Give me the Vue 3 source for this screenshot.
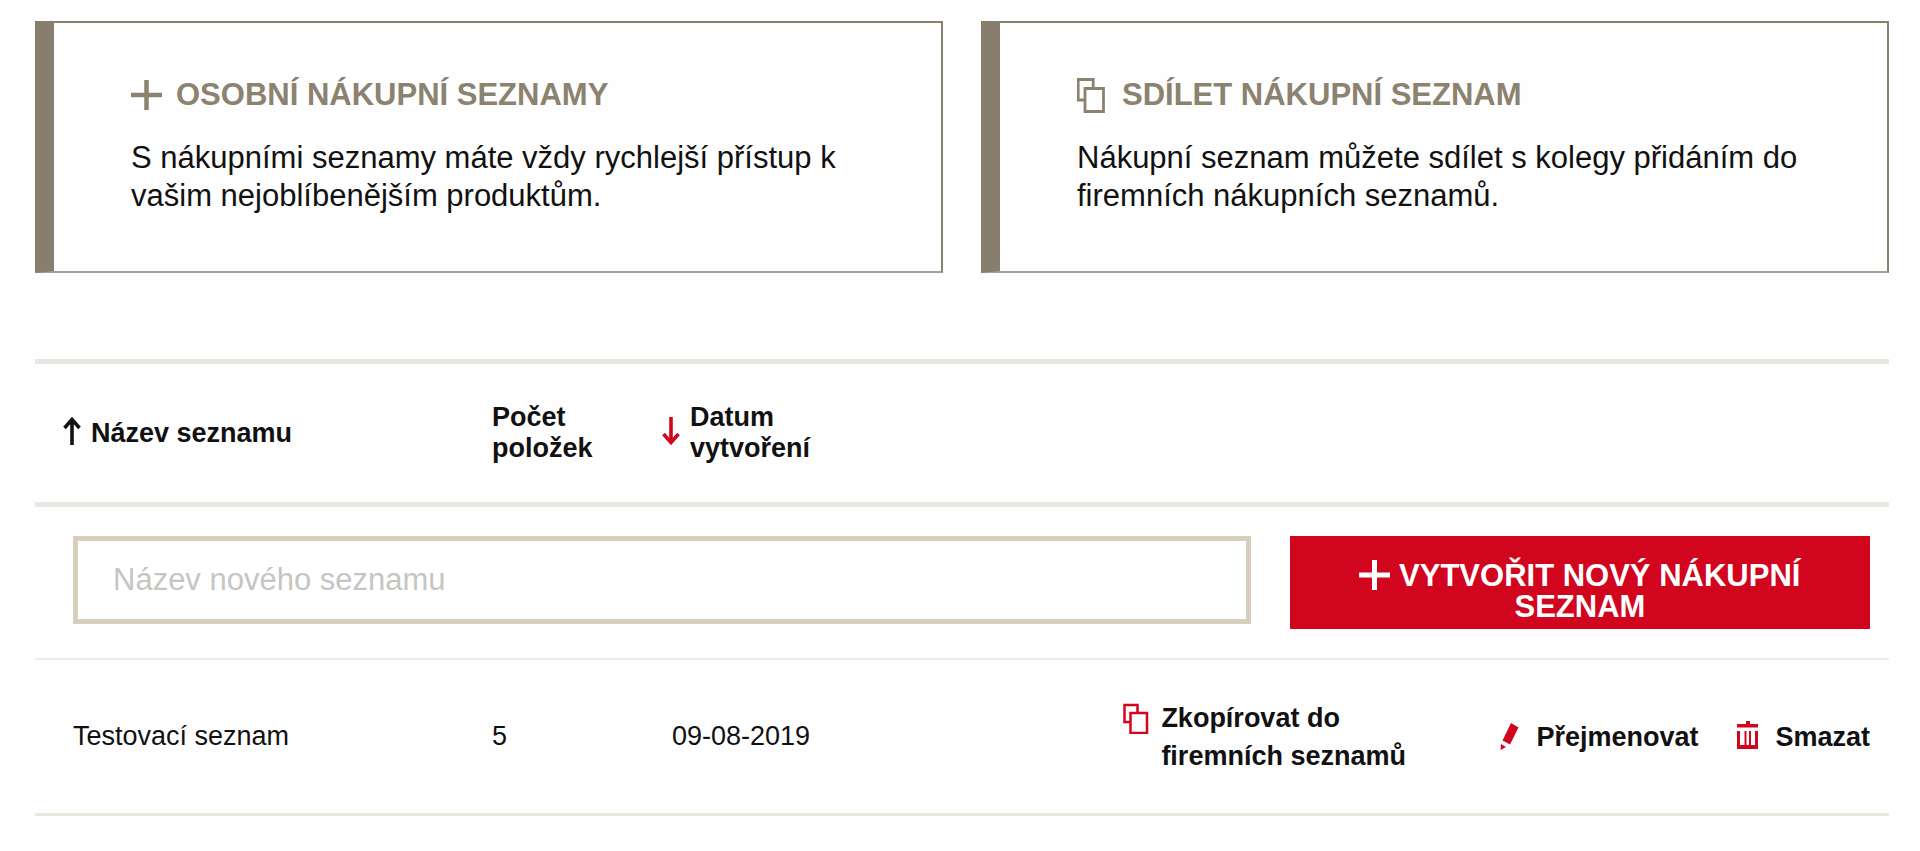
<script setup>
import { ref } from 'vue'

const newName = ref('')
const lists = [{ name: 'Testovací seznam', count: 5, created: '09-08-2019' }]
</script>

<template>
  <main class="page">
    <div class="cards">
      <section class="card">
        <h2 class="card-title">
          <svg class="card-icon" viewBox="0 0 34 36" aria-hidden="true">
            <path d="M15.500 3v30M0 18h31" fill="none" stroke="currentColor" stroke-width="4.500" />
          </svg>
          OSOBNÍ NÁKUPNÍ SEZNAMY
        </h2>
        <p class="card-text">S nákupními seznamy máte vždy rychlejší přístup k vašim nejoblíbenějším produktům.</p>
      </section>
      <section class="card">
        <h2 class="card-title">
          <svg class="card-icon" viewBox="0 0 34 36" aria-hidden="true">
            <path d="M8 23H1.200V2.500h15v9M8 11.500h18.500v23H8z" fill="none" stroke="currentColor" stroke-width="2.800" />
          </svg>
          SDÍLET NÁKUPNÍ SEZNAM
        </h2>
        <p class="card-text">Nákupní seznam můžete sdílet s kolegy přidáním do firemních nákupních seznamů.</p>
      </section>
    </div>

    <table class="lists">
      <colgroup>
        <col class="col-name" />
        <col class="col-count" />
        <col class="col-date" />
        <col />
      </colgroup>
      <thead>
        <tr>
          <th class="sortable" scope="col">
            <button class="sort" type="button">
              <svg class="arrow" viewBox="0 0 18 28" aria-hidden="true">
                <path d="M9 28V3M1.500 11L9 2.500l7.500 8.500" fill="none" stroke="currentColor" stroke-width="3.600" />
              </svg>
              <span>Název seznamu</span>
            </button>
          </th>
          <th scope="col">Počet<br />položek</th>
          <th class="sortable" scope="col">
            <button class="sort" type="button">
              <svg class="arrow active" viewBox="0 0 18 28" aria-hidden="true">
                <path d="M9 0v25M1.500 17L9 25.500l7.500-8.500" fill="none" stroke="currentColor" stroke-width="3.600" />
              </svg>
              <span>Datum<br />vytvoření</span>
            </button>
          </th>
          <td></td>
        </tr>
      </thead>
      <tbody>
        <tr class="create-row">
          <td colspan="4">
            <form class="create" @submit.prevent>
              <input v-model="newName" class="name-input" type="text" placeholder="Název nového seznamu" aria-label="Název nového seznamu" />
              <button class="create-button" type="submit">
                <svg class="plus" viewBox="0 0 31 30" aria-hidden="true">
                  <path d="M15.500 0v30M0 15h31" fill="none" stroke="currentColor" stroke-width="5" />
                </svg>
                VYTVOŘIT NOVÝ NÁKUPNÍ SEZNAM
              </button>
            </form>
          </td>
        </tr>
        <tr v-for="list in lists" :key="list.name" class="list-row">
          <td>{{ list.name }}</td>
          <td>{{ list.count }}</td>
          <td>{{ list.created }}</td>
          <td class="actions-cell">
            <div class="actions">
              <button class="action copy" type="button">
                <svg class="action-icon" viewBox="0 0 26 32" aria-hidden="true">
                  <path d="M7.500 20H1.500V3h13v8M7.500 11h16.500v20H7.500z" fill="none" stroke="currentColor" stroke-width="2.500" />
                </svg>
                <span>Zkopírovat do<br />firemních seznamů</span>
              </button>
              <button class="action" type="button">
                <svg class="action-icon" viewBox="0 0 26 32" aria-hidden="true">
                  <path d="M13 2l7.500 4.500L12 23.500 4.500 19.500zM3 23l5 3L2.500 29z" fill="currentColor" />
                </svg>
                <span>Přejmenovat</span>
              </button>
              <button class="action" type="button">
                <svg class="action-icon" viewBox="0 0 26 32" aria-hidden="true">
                  <path d="M0 3h9V0h4v3h8v3.500H0zM0 10h3v14h4.500V10h2v14h2.500V10h2v14H18V10h3v18H0z" fill="currentColor" />
                </svg>
                <span>Smazat</span>
              </button>
            </div>
          </td>
        </tr>
      </tbody>
    </table>
  </main>
</template>

<style>
body {
  background: #fefefe;
}
</style>

<style scoped>
.page {
  box-sizing: border-box;
  padding: 21px 31px 32px 35px;
  color: #111;
  font-family: "Liberation Sans", Arial, sans-serif;
  font-size: 27px;
}

.cards {
  display: grid;
  grid-template-columns: 1fr 1fr;
  gap: 38px;
  margin-bottom: 86px;
}

.card {
  padding: 54px 77px 56px;
  border: 2px solid #88816f;
  border-left: 19px solid #887e6d;
  border-bottom-color: #a5a196;
}

.card-title {
  display: flex;
  align-items: center;
  gap: 11px;
  margin: 0 0 26px;
  color: #8b8270;
  font-size: 31px;
  line-height: 36px;
}

.card-icon {
  flex: none;
  width: 34px;
  height: 36px;
}

.card-text {
  margin: 0;
  font-size: 31px;
  line-height: 38px;
}

.lists {
  width: 100%;
  table-layout: fixed;
  border-collapse: separate;
  border-spacing: 0;
  border-top: 5px solid #e8e6e0;
  border-bottom: 3px solid #e7e7dd;
}

.col-name {
  width: 419px;
}

.col-count {
  width: 180px;
}

.col-date {
  width: 200px;
}

th,
td {
  padding: 0 0 0 38px;
  text-align: left;
  vertical-align: middle;
}

thead th,
thead td {
  height: 138px;
  border-bottom: 5px solid #ebe7e3;
  line-height: 31px;
}

.sortable {
  padding-left: 28px;
}

button {
  padding: 0;
  border: 0;
  background: none;
  color: inherit;
  font: inherit;
  font-weight: bold;
  text-align: left;
  cursor: pointer;
}

.sort {
  display: flex;
  align-items: center;
  gap: 10px;
}

.arrow {
  flex: none;
  width: 18px;
  height: 28px;
  margin-bottom: 4px;
}

.arrow.active {
  color: #d2051e;
}

.create-row td {
  padding: 29px 19px 29px 38px;
  border-bottom: 2px solid #ebebeb;
}

.create {
  display: grid;
  grid-template-columns: 67fr 33fr;
  align-items: start;
  gap: 39px;
}

.name-input {
  box-sizing: border-box;
  width: 100%;
  height: 88px;
  padding: 0 35px;
  border: 5px solid #d7cebd;
  border-radius: 0;
  background: #fff;
  color: #111;
  font: inherit;
  font-size: 31px;
  outline: none;
}

.name-input::placeholder {
  color: #c6c5c1;
  opacity: 1;
}

.create-button {
  padding: 24px 24px 7px;
  background: #d2051e;
  color: #fff;
  font-size: 31px;
  line-height: 31px;
  text-align: center;
}

.plus {
  width: 31px;
  height: 30px;
  vertical-align: -4px;
}

.list-row td {
  height: 153px;
}

.list-row .actions-cell {
  padding: 0 19px 0 0;
}

.actions {
  display: flex;
  align-items: center;
  justify-content: flex-end;
  gap: 39px;
}

.action {
  display: flex;
  align-items: flex-start;
  gap: 12px;
  line-height: 38px;
}

.copy {
  width: 336px;
}

.action-icon {
  flex: none;
  width: 26px;
  height: 32px;
  margin-top: 3px;
  color: #d2051e;
}
</style>
